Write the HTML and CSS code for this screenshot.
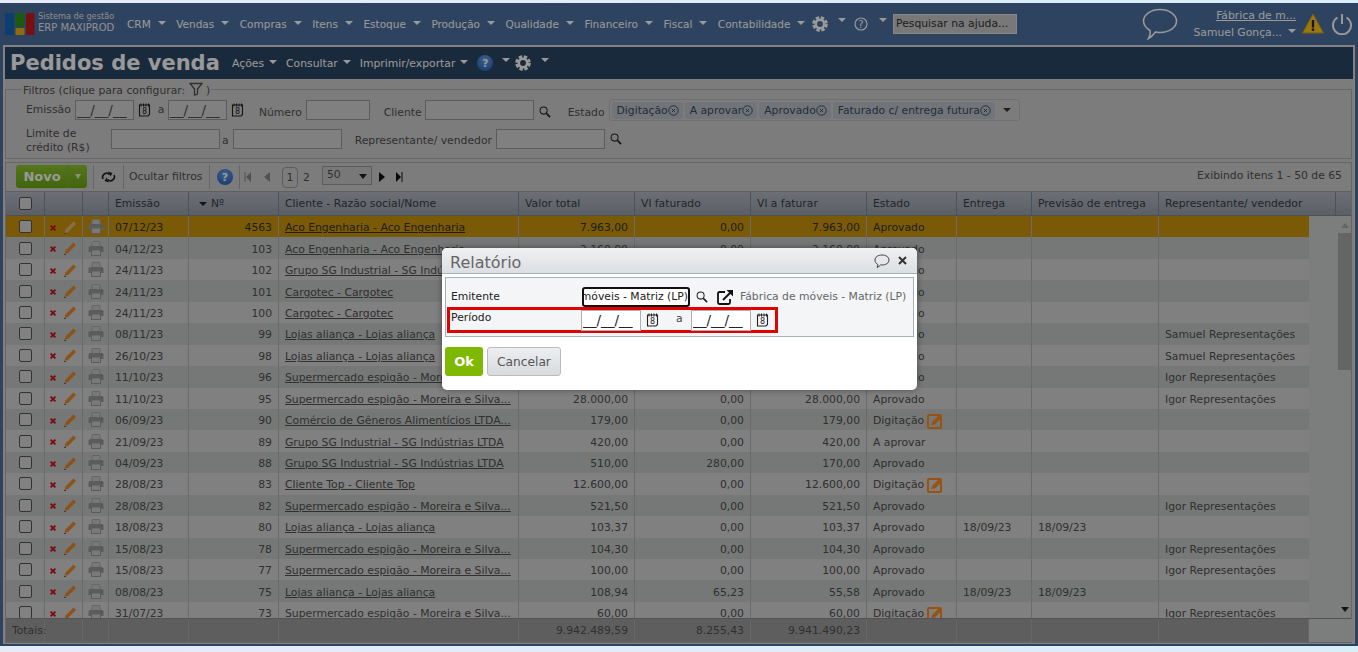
FILE: index.html
```html
<!DOCTYPE html>
<html lang="pt-BR">
<head>
<meta charset="utf-8">
<title>Pedidos de venda</title>
<link rel="stylesheet" href="styles.css">
</head>
<body>
<svg class="defs" width="0" height="0">
  <symbol id="cal" viewBox="0 0 13 14"><path d="M1.500 2h10v9.500L10 13H1.500V2z" fill="none" stroke="currentColor" stroke-width="1.100"/><path d="M3 .5v3M5.500.5v3M8 .5v3M10.500.5v3" stroke="currentColor"/><text x="6.500" y="11.200" font-size="8" text-anchor="middle" fill="currentColor" font-family="DejaVu Sans">8</text></symbol>
  <symbol id="search" viewBox="0 0 13 13"><circle cx="5" cy="5" r="3.800" fill="none" stroke="currentColor" stroke-width="1.100"/><path d="M8 8l4 4" stroke="currentColor" stroke-width="1.800"/></symbol>
  <symbol id="del" viewBox="0 0 10 10"><path d="M2 2l6 6M8 2l-6 6" stroke="#d0141c" stroke-width="2.400"/></symbol>
  <symbol id="pen" viewBox="0 0 14 14"><path d="M1.500 13l1-3.500L10.500 1.500 13 4 5 12z" fill="currentColor"/><path d="M1 13.500h2" stroke="#666"/></symbol>
  <symbol id="print" viewBox="0 0 16 15"><rect x="4" y=".5" width="8" height="5" rx="1" fill="#c8c8c8" stroke="#aaa"/><path d="M1.500 5h13l1 1.500V11H.5V6.500z" fill="#9a9a9a"/><rect x="3.500" y="9" width="9" height="5.500" fill="#ccc" stroke="#999"/><rect x="13" y="6" width="1.500" height="1.500" fill="#5a5"/></symbol>
  <symbol id="note" viewBox="0 0 16 16"><rect x="1" y="2" width="13" height="13" rx="1" fill="none" stroke="#ff8a1c" stroke-width="2"/><path d="M4 12l1-3 7-7 3 2.500-7 7z" fill="#ff8a1c"/></symbol>
  <symbol id="gear" viewBox="0 0 16 16"><circle cx="8" cy="8" r="4.200" fill="none" stroke="currentColor" stroke-width="2.600"/><circle cx="8" cy="8" r="6.300" fill="none" stroke="currentColor" stroke-width="3" stroke-dasharray="3.300 1.650"/></symbol>
  <symbol id="close" viewBox="0 0 10 10"><circle cx="5" cy="5" r="4.300" fill="none" stroke="currentColor" stroke-width=".9"/><path d="M3.500 3.500l3 3M6.500 3.500l-3 3" stroke="currentColor" stroke-width=".9"/></symbol>
</svg>

<div class="app">
  <header class="topbar">
    <svg class="logo" width="30" height="22" viewBox="0 0 30 22"><rect x="0" y="0" width="9" height="22" rx="1.500" fill="#1668bc"/><rect x="10.500" y="0" width="9" height="14" rx="1" fill="#2f961b"/><rect x="10.500" y="15" width="9" height="7" rx="1" fill="#f0b41a"/><rect x="21" y="0" width="8.500" height="22" rx="1.500" fill="#c81a22"/></svg>
    <div class="brand"><span class="brand-top">Sistema de gestão</span><span class="brand-name">ERP MAXIPROD</span></div>
    <nav class="menu">
      <span class="menu-item caret">CRM</span>
      <span class="menu-item caret">Vendas</span>
      <span class="menu-item caret">Compras</span>
      <span class="menu-item caret">Itens</span>
      <span class="menu-item caret">Estoque</span>
      <span class="menu-item caret">Produção</span>
      <span class="menu-item caret">Qualidade</span>
      <span class="menu-item caret">Financeiro</span>
      <span class="menu-item caret">Fiscal</span>
      <span class="menu-item caret">Contabilidade</span>
    </nav>
    <svg class="top-gear"><use href="#gear"/></svg>
    <span class="caret caret-solo"></span>
    <svg class="top-help" viewBox="0 0 14 14"><circle cx="7" cy="7" r="6" fill="none" stroke="currentColor" stroke-width="1.200"/><text x="7" y="10.500" font-size="10" text-anchor="middle" fill="currentColor" font-family="DejaVu Sans">?</text></svg>
    <span class="caret caret-solo second"></span>
    <input class="help-search" placeholder="Pesquisar na ajuda...">
    <svg class="chat" viewBox="0 0 36 32"><path d="M18 1.500c9 0 16.500 5 16.500 11.500S27 24.500 18 24.500c-1.500 0-3 0-4.500-.5-1.500 2-4 5-7 6.500 1.500-2.500 2-5 1.500-8C4 20 1.500 16.500 1.500 13 1.500 6.500 9 1.500 18 1.500z" fill="none" stroke="currentColor" stroke-width="1.500"/></svg>
    <div class="user">
      <a class="company">Fábrica de m...</a>
      <span class="username caret">Samuel Gonça...</span>
    </div>
    <svg class="warn" viewBox="0 0 22 21"><path d="M11 1l10.500 19H.5z" fill="#ffc81e" stroke="#c89a10"/><rect x="9.800" y="7" width="2.400" height="7.500" fill="#222"/><rect x="9.800" y="15.500" width="2.400" height="2.400" fill="#222"/></svg>
    <svg class="power" viewBox="0 0 22 22"><path d="M6.500 4.500a9 9 0 1 0 9 0" fill="none" stroke="currentColor" stroke-width="2"/><path d="M11 1v10" stroke="currentColor" stroke-width="2"/></svg>
  </header>

  <main class="panel">
    <div class="titlebar">
      <h1>Pedidos de venda</h1>
      <span class="title-menu caret">Ações</span>
      <span class="title-menu caret">Consultar</span>
      <span class="title-menu caret">Imprimir/exportar</span>
      <span class="round-help">?</span>
      <span class="caret caret-solo t1"></span>
      <svg class="title-gear"><use href="#gear"/></svg>
      <span class="caret caret-solo t2"></span>
    </div>

    <fieldset class="filters">
      <legend>Filtros (clique para configurar: <svg class="funnel" viewBox="0 0 14 14"><path d="M1 1.500h12L8.500 7v5l-3 1V7z" fill="none" stroke="currentColor" stroke-width="1.300"/></svg> )</legend>
      <div class="filter-row first">
        <label class="raised">Emissão</label>
        <input class="f-date m4" value="__/__/__">
        <svg class="i-cal m4"><use href="#cal"/></svg>
        <span class="raised sep8">a</span>
        <input class="f-date m4" value="__/__/__">
        <svg class="i-cal m4"><use href="#cal"/></svg>
        <label class="m17">Número</label>
        <input class="f-num m5">
        <label class="m14">Cliente</label>
        <input class="f-client m4">
        <svg class="i-search m5"><use href="#search"/></svg>
        <label class="m17">Estado</label>
        <div class="tags">
          <span class="tag">Digitação<svg class="x"><use href="#close"/></svg></span>
          <span class="tag">A aprovar<svg class="x"><use href="#close"/></svg></span>
          <span class="tag">Aprovado<svg class="x"><use href="#close"/></svg></span>
          <span class="tag">Faturado c/ entrega futura<svg class="x"><use href="#close"/></svg></span>
          <span class="tags-caret"></span>
        </div>
      </div>
      <div class="filter-row second">
        <label class="limit">Limite de<br>crédito (R$)</label>
        <input class="f-value">
        <span class="between">a</span>
        <input class="f-value">
        <label class="m13">Representante/ vendedor</label>
        <input class="f-value m5">
        <svg class="i-search m5"><use href="#search"/></svg>
      </div>
    </fieldset>

    <div class="toolbar">
      <div class="novo"><span class="novo-label">Novo</span><span class="novo-arrow"></span></div>
      <span class="tb-sep s1"></span>
      <svg class="refresh" viewBox="0 0 15 12"><path d="M2 8A4 4 0 0 1 8.500 3.500" fill="none" stroke="currentColor" stroke-width="1.700"/><path d="M13 4A4 4 0 0 1 6.500 8.500" fill="none" stroke="currentColor" stroke-width="1.700"/><path d="M7 .5l4.500 1.500-2 3.500zM8 11.500L3.500 10l2-3.500z" fill="currentColor"/></svg>
      <span class="tb-sep s2"></span>
      <span class="tb-text">Ocultar filtros</span>
      <span class="tb-sep s3"></span>
      <span class="round-help big">?</span>
      <span class="tb-sep s4"></span>
      <svg class="pg first-pg" viewBox="0 0 7 10"><path d="M1 0v10" stroke="currentColor"/><path d="M7 0v10L2 5z" fill="currentColor"/></svg>
      <svg class="pg prev-pg" viewBox="0 0 6 10"><path d="M6 0v10L0 5z" fill="currentColor"/></svg>
      <span class="pg-current">1</span>
      <span class="pg-num">2</span>
      <div class="pg-size">50<span class="pg-size-caret"></span></div>
      <svg class="pg next-pg" viewBox="0 0 6 10"><path d="M0 0v10l6-5z" fill="currentColor"/></svg>
      <svg class="pg last-pg" viewBox="0 0 7 10"><path d="M0 0v10l5-5z" fill="currentColor"/><path d="M6 0v10" stroke="currentColor"/></svg>
      <span class="tb-info">Exibindo itens 1 - 50 de 65</span>
    </div>

    <div class="grid">
      <div class="cols thead">
        <span class="center"><i class="chk"></i></span><span></span><span></span>
        <span>Emissão</span><span class="sorted">Nº</span><span>Cliente - Razão social/Nome</span>
        <span>Valor total</span><span>Vl faturado</span><span>Vl a faturar</span><span>Estado</span>
        <span>Entrega</span><span>Previsão de entrega</span><span>Representante/ vendedor</span><span></span>
      </div>
      <div class="tbody">
        <div class="rows">
          <div class="cols row selected"><span class="center"><i class="chk"></i></span><span class="acts"><svg class="i-del"><use href="#del"/></svg><svg class="i-pen"><use href="#pen"/></svg></span><span class="center"><svg class="i-print"><use href="#print"/></svg></span><span>07/12/23</span><span class="num">4563</span><span><a>Aco Engenharia - Aco Engenharia</a></span><span class="num">7.963,00</span><span class="num">0,00</span><span class="num">7.963,00</span><span>Aprovado</span><span></span><span></span><span></span></div>
          <div class="cols row"><span class="center"><i class="chk"></i></span><span class="acts"><svg class="i-del"><use href="#del"/></svg><svg class="i-pen"><use href="#pen"/></svg></span><span class="center"><svg class="i-print"><use href="#print"/></svg></span><span>04/12/23</span><span class="num">103</span><span><a>Aco Engenharia - Aco Engenharia</a></span><span class="num">2.160,00</span><span class="num">0,00</span><span class="num">2.160,00</span><span>Aprovado</span><span></span><span></span><span></span></div>
          <div class="cols row"><span class="center"><i class="chk"></i></span><span class="acts"><svg class="i-del"><use href="#del"/></svg><svg class="i-pen"><use href="#pen"/></svg></span><span class="center"><svg class="i-print"><use href="#print"/></svg></span><span>24/11/23</span><span class="num">102</span><span><a>Grupo SG Industrial - SG Indústrias LTDA</a></span><span class="num">840,00</span><span class="num">0,00</span><span class="num">840,00</span><span>Aprovado</span><span></span><span></span><span></span></div>
          <div class="cols row"><span class="center"><i class="chk"></i></span><span class="acts"><svg class="i-del"><use href="#del"/></svg><svg class="i-pen"><use href="#pen"/></svg></span><span class="center"><svg class="i-print"><use href="#print"/></svg></span><span>24/11/23</span><span class="num">101</span><span><a>Cargotec - Cargotec</a></span><span class="num">1.250,00</span><span class="num">0,00</span><span class="num">1.250,00</span><span>Aprovado</span><span></span><span></span><span></span></div>
          <div class="cols row"><span class="center"><i class="chk"></i></span><span class="acts"><svg class="i-del"><use href="#del"/></svg><svg class="i-pen"><use href="#pen"/></svg></span><span class="center"><svg class="i-print"><use href="#print"/></svg></span><span>24/11/23</span><span class="num">100</span><span><a>Cargotec - Cargotec</a></span><span class="num">1.250,00</span><span class="num">0,00</span><span class="num">1.250,00</span><span>Aprovado</span><span></span><span></span><span></span></div>
          <div class="cols row"><span class="center"><i class="chk"></i></span><span class="acts"><svg class="i-del"><use href="#del"/></svg><svg class="i-pen"><use href="#pen"/></svg></span><span class="center"><svg class="i-print"><use href="#print"/></svg></span><span>08/11/23</span><span class="num">99</span><span><a>Lojas aliança - Lojas aliança</a></span><span class="num">300,00</span><span class="num">0,00</span><span class="num">300,00</span><span>Aprovado</span><span></span><span></span><span>Samuel Representações</span></div>
          <div class="cols row"><span class="center"><i class="chk"></i></span><span class="acts"><svg class="i-del"><use href="#del"/></svg><svg class="i-pen"><use href="#pen"/></svg></span><span class="center"><svg class="i-print"><use href="#print"/></svg></span><span>26/10/23</span><span class="num">98</span><span><a>Lojas aliança - Lojas aliança</a></span><span class="num">300,00</span><span class="num">0,00</span><span class="num">300,00</span><span>Aprovado</span><span></span><span></span><span>Samuel Representações</span></div>
          <div class="cols row"><span class="center"><i class="chk"></i></span><span class="acts"><svg class="i-del"><use href="#del"/></svg><svg class="i-pen"><use href="#pen"/></svg></span><span class="center"><svg class="i-print"><use href="#print"/></svg></span><span>11/10/23</span><span class="num">96</span><span><a>Supermercado espigão - Moreira e Silva...</a></span><span class="num">500,00</span><span class="num">0,00</span><span class="num">500,00</span><span>Aprovado</span><span></span><span></span><span>Igor Representações</span></div>
          <div class="cols row"><span class="center"><i class="chk"></i></span><span class="acts"><svg class="i-del"><use href="#del"/></svg><svg class="i-pen"><use href="#pen"/></svg></span><span class="center"><svg class="i-print"><use href="#print"/></svg></span><span>11/10/23</span><span class="num">95</span><span><a>Supermercado espigão - Moreira e Silva...</a></span><span class="num">28.000,00</span><span class="num">0,00</span><span class="num">28.000,00</span><span>Aprovado</span><span></span><span></span><span>Igor Representações</span></div>
          <div class="cols row"><span class="center"><i class="chk"></i></span><span class="acts"><svg class="i-del"><use href="#del"/></svg><svg class="i-pen"><use href="#pen"/></svg></span><span class="center"><svg class="i-print"><use href="#print"/></svg></span><span>06/09/23</span><span class="num">90</span><span><a>Comércio de Gêneros Alimentícios LTDA...</a></span><span class="num">179,00</span><span class="num">0,00</span><span class="num">179,00</span><span class="state">Digitação<svg class="i-note"><use href="#note"/></svg></span><span></span><span></span><span></span></div>
          <div class="cols row"><span class="center"><i class="chk"></i></span><span class="acts"><svg class="i-del"><use href="#del"/></svg><svg class="i-pen"><use href="#pen"/></svg></span><span class="center"><svg class="i-print"><use href="#print"/></svg></span><span>21/09/23</span><span class="num">89</span><span><a>Grupo SG Industrial - SG Indústrias LTDA</a></span><span class="num">420,00</span><span class="num">0,00</span><span class="num">420,00</span><span>A aprovar</span><span></span><span></span><span></span></div>
          <div class="cols row"><span class="center"><i class="chk"></i></span><span class="acts"><svg class="i-del"><use href="#del"/></svg><svg class="i-pen"><use href="#pen"/></svg></span><span class="center"><svg class="i-print"><use href="#print"/></svg></span><span>04/09/23</span><span class="num">88</span><span><a>Grupo SG Industrial - SG Indústrias LTDA</a></span><span class="num">510,00</span><span class="num">280,00</span><span class="num">170,00</span><span>Aprovado</span><span></span><span></span><span></span></div>
          <div class="cols row"><span class="center"><i class="chk"></i></span><span class="acts"><svg class="i-del"><use href="#del"/></svg><svg class="i-pen"><use href="#pen"/></svg></span><span class="center"><svg class="i-print"><use href="#print"/></svg></span><span>28/08/23</span><span class="num">83</span><span><a>Cliente Top - Cliente Top</a></span><span class="num">12.600,00</span><span class="num">0,00</span><span class="num">12.600,00</span><span class="state">Digitação<svg class="i-note"><use href="#note"/></svg></span><span></span><span></span><span></span></div>
          <div class="cols row"><span class="center"><i class="chk"></i></span><span class="acts"><svg class="i-del"><use href="#del"/></svg><svg class="i-pen"><use href="#pen"/></svg></span><span class="center"><svg class="i-print"><use href="#print"/></svg></span><span>28/08/23</span><span class="num">82</span><span><a>Supermercado espigão - Moreira e Silva...</a></span><span class="num">521,50</span><span class="num">0,00</span><span class="num">521,50</span><span>Aprovado</span><span></span><span></span><span>Igor Representações</span></div>
          <div class="cols row"><span class="center"><i class="chk"></i></span><span class="acts"><svg class="i-del"><use href="#del"/></svg><svg class="i-pen"><use href="#pen"/></svg></span><span class="center"><svg class="i-print"><use href="#print"/></svg></span><span>18/08/23</span><span class="num">80</span><span><a>Lojas aliança - Lojas aliança</a></span><span class="num">103,37</span><span class="num">0,00</span><span class="num">103,37</span><span>Aprovado</span><span>18/09/23</span><span>18/09/23</span><span></span></div>
          <div class="cols row"><span class="center"><i class="chk"></i></span><span class="acts"><svg class="i-del"><use href="#del"/></svg><svg class="i-pen"><use href="#pen"/></svg></span><span class="center"><svg class="i-print"><use href="#print"/></svg></span><span>15/08/23</span><span class="num">78</span><span><a>Supermercado espigão - Moreira e Silva...</a></span><span class="num">104,30</span><span class="num">0,00</span><span class="num">104,30</span><span>Aprovado</span><span></span><span></span><span>Igor Representações</span></div>
          <div class="cols row"><span class="center"><i class="chk"></i></span><span class="acts"><svg class="i-del"><use href="#del"/></svg><svg class="i-pen"><use href="#pen"/></svg></span><span class="center"><svg class="i-print"><use href="#print"/></svg></span><span>15/08/23</span><span class="num">77</span><span><a>Supermercado espigão - Moreira e Silva...</a></span><span class="num">100,00</span><span class="num">0,00</span><span class="num">100,00</span><span>Aprovado</span><span></span><span></span><span>Igor Representações</span></div>
          <div class="cols row"><span class="center"><i class="chk"></i></span><span class="acts"><svg class="i-del"><use href="#del"/></svg><svg class="i-pen"><use href="#pen"/></svg></span><span class="center"><svg class="i-print"><use href="#print"/></svg></span><span>08/08/23</span><span class="num">75</span><span><a>Lojas aliança - Lojas aliança</a></span><span class="num">108,94</span><span class="num">65,23</span><span class="num">55,58</span><span>Aprovado</span><span>18/09/23</span><span>18/09/23</span><span></span></div>
          <div class="cols row"><span class="center"><i class="chk"></i></span><span class="acts"><svg class="i-del"><use href="#del"/></svg><svg class="i-pen"><use href="#pen"/></svg></span><span class="center"><svg class="i-print"><use href="#print"/></svg></span><span>31/07/23</span><span class="num">73</span><span><a>Supermercado espigão - Moreira e Silva...</a></span><span class="num">60,00</span><span class="num">0,00</span><span class="num">60,00</span><span class="state">Digitação<svg class="i-note"><use href="#note"/></svg></span><span></span><span></span><span>Igor Representações</span></div>
        </div>
        <div class="scrollbar">
          <span class="sb-up"></span>
          <div class="sb-track"><div class="sb-thumb"></div></div>
          <span class="sb-down"></span>
        </div>
      </div>
      <div class="cols tfoot">
        <span class="total-label">Totais:</span><span></span><span></span><span></span><span></span><span></span>
        <span class="num">9.942.489,59</span><span class="num">8.255,43</span><span class="num">9.941.490,23</span><span></span><span></span><span></span><span></span><span class="foot-gap"></span>
      </div>
    </div>
  </main>
</div>

<div class="overlay"></div>

<section class="modal">
  <div class="modal-head">
    <h2>Relatório</h2>
    <svg class="modal-chat" viewBox="0 0 16 14"><path d="M8 1c3.900 0 7 2 7 5s-3.100 5-7 5H6.500c-.8 1-2 2-3.500 2.500.7-1 1-2 .8-3C2 9.700 1 8 1 6c0-3 3.100-5 7-5z" fill="none" stroke="currentColor"/></svg>
    <svg class="modal-x" viewBox="0 0 9 9"><path d="M1 1l7 7M8 1L1 8" stroke="currentColor" stroke-width="2"/></svg>
  </div>
  <div class="modal-form">
    <div class="form-row emitente">
      <label>Emitente</label>
      <div class="focus-input"><span>móveis - Matriz (LP)</span></div>
      <svg class="i-search dark"><use href="#search"/></svg>
      <svg class="open" viewBox="0 0 17 16"><path d="M8 3H2.500A1.500 1.500 0 0 0 1 4.500v9A1.500 1.500 0 0 0 2.500 15h9a1.500 1.500 0 0 0 1.500-1.500V10" fill="none" stroke="#111" stroke-width="1.800"/><path d="M6 11L14 3" stroke="#111" stroke-width="2"/><path d="M9.500 1H16v6.500z" fill="#111"/></svg>
      <span class="emit-name">Fábrica de móveis - Matriz (LP)</span>
    </div>
    <div class="form-row periodo">
      <label>Período</label>
      <input class="d-date" value="__/__/__">
      <svg class="i-cal dark-cal"><use href="#cal"/></svg>
      <span class="d-a">a</span>
      <input class="d-date" value="__/__/__">
      <svg class="i-cal dark-cal"><use href="#cal"/></svg>
    </div>
  </div>
  <div class="modal-actions">
    <button class="ok">Ok</button>
    <button class="cancel">Cancelar</button>
  </div>
</section>
</body>
</html>
```

FILE: styles.css
```css
* { box-sizing: border-box; }
html, body { height: 100%; }
body {
  margin: 0;
  height: 652px;
  overflow: hidden;
  position: relative;
  background: linear-gradient(90deg, #e6ebf8, #d8eef8);
  font: 10.8px "DejaVu Sans", Verdana, sans-serif;
  color: #505050;
}
.defs { position: absolute; }
a { color: inherit; text-decoration: underline; }
input { font: inherit; color: #505050; margin: 0; border-radius: 0; }
h1, h2 { margin: 0; }

.app {
  margin-top: 3px;
  height: 643px;
  padding: 0 3px 2px;
  background: #4e71a0;
  border-top: 1px solid #4e71a0;
}

/* top bar */
.topbar { height: 41px; padding-bottom: 2px; display: flex; align-items: center; color: #fff; }
.logo { margin-left: 2px; flex: none; }
.brand { margin: -3px 0 0 3px; width: 87px; display: flex; flex-direction: column; line-height: 12px; flex: none; white-space: nowrap; }
.brand-top { font-size: 8.2px; color: #e6e6e6; }
.brand-name { font-size: 10px; color: #eee; }
.menu { display: flex; margin-left: 2px; width: 685px; flex: none; font-size: 10.5px; }
.menu-item { margin-right: 10.500px; white-space: nowrap; }
.caret::after {
  content: "";
  display: inline-block;
  margin-left: 7px;
  vertical-align: 3px;
  border: 4px solid transparent;
  border-bottom-width: 0;
  border-top: 4px solid #fff;
}
.caret-solo { width: 8px; height: 8px; display: flex; flex: none; }
.caret-solo::after { margin: 0; vertical-align: 0; }
.top-gear { width: 16px; height: 16px; flex: none; }
.topbar .caret-solo { margin-left: 10px; margin-top: -3px; }
.top-help { width: 14px; height: 14px; margin-left: 8px; flex: none; }
.topbar .caret-solo.second { margin-left: 11px; }
.help-search {
  width: 124px; height: 20px; margin: 0 0 0 6px; padding: 0 2px;
  background: #c9c9c9; border: 1px solid #e0e0e0; flex: none;
}
.help-search::placeholder { color: #333; opacity: 1; }
.chat { width: 36px; height: 32px; margin-left: 125px; flex: none; }
.user { width: 118px; display: flex; flex-direction: column; align-items: flex-end; line-height: 17px; flex: none; white-space: nowrap; }
.username::after { margin-left: 6px; }
.warn { width: 22px; height: 21px; margin-left: 6px; flex: none; }
.power { width: 22px; height: 22px; margin-left: 7px; flex: none; }

/* panel */
.panel { height: 599px; border: 2px solid #d8d8d8; background: #cfcfcf; }
.titlebar { height: 32px; background: #2b4664; display: flex; align-items: center; color: #fff; }
.titlebar h1 { font-size: 21px; font-weight: bold; margin-left: 5px; width: 222px; flex: none; white-space: nowrap; }
.title-menu { margin-right: 9px; white-space: nowrap; }
.title-menu::after { margin-left: 5px; }
.round-help {
  width: 16px; height: 16px; border-radius: 50%;
  background: radial-gradient(circle at 50% 30%, #6aa0e8, #1d5cb4);
  color: #fff; font-weight: bold; display: flex; align-items: center; justify-content: center; flex: none;
}
.t1 { margin-left: 9px; margin-top: -3px; }
.title-gear { width: 16px; height: 16px; margin-left: 5px; flex: none; }
.t2 { margin-left: 10px; margin-top: -3px; }

/* filters */
.filters {
  margin: 2px 0 0; padding: 0 0 0 20px; height: 78px; width: 1347px;
  border: 1px solid #aaa; min-width: 0;
}
.filters legend { padding: 0 1px; margin-left: -4px; line-height: 20px; height: 16px; white-space: nowrap; }
.funnel { width: 14px; height: 14px; vertical-align: -2px; }
.filter-row { display: flex; align-items: center; }
.filter-row.first { height: 24px; margin-top: 3px; }
.filter-row.second { height: 30px; margin-top: 1px; }
.filters input { height: 20px; background: #d5d5d5; border: 1px solid #999; padding: 0 2px; }
.raised { margin-top: -5px; }
.m4 { margin-left: 4px; } .m5 { margin-left: 5px; }
.m13 { margin-left: 13px; } .m14 { margin-left: 14px; } .m17 { margin-left: 17px; }
.sep8 { margin-left: 7px; }
.filters .f-date { width: 59px; margin-top: -5px; font-size: 13.5px; padding: 0 1px; }
.filters .sep8 + .f-date { margin-left: 3.500px; }
.i-cal + .m17 { margin-left: 15px; }
.f-num { width: 64px; margin-top: -4px; } .f-client { width: 109px; margin-top: -4px; } .f-value { width: 109px; }
.f-num.m5 { margin-left: 4px; }
.f-client.m4 { margin-left: 3px; }
.second .f-value.m5 { margin-left: 4px; }
.i-cal { width: 13px; height: 14px; flex: none; color: #222; margin-top: -5px; }
.i-search { width: 12px; height: 12px; flex: none; color: #222; }
.second .i-search { margin-top: -2px; }
.tags {
  display: flex; align-items: center; gap: 2px; height: 22px; width: 411px; margin: -4px 0 0 4px; padding-left: 2px;
  border: 1px solid #bbb; border-radius: 3px;
}
.tag { height: 17px; padding: 0 4px 0 5px; background: #bcc4cc; border-radius: 3px; display: flex; align-items: center; white-space: nowrap; color: #3c4a58; }
.x { width: 11px; height: 11px; color: #3c4a58; }
.tags-caret { margin-left: 6px; border: 4px solid transparent; border-bottom-width: 0; border-top-color: #333; }
.limit { width: 85px; line-height: 14px; margin-top: 2px; }
.between { margin: 0 4px 0 2px; }
.second input { margin-top: -2px; }

/* toolbar */
.toolbar {
  margin-top: 3px; height: 29px; width: 1347px; padding-left: 10px;
  display: flex; align-items: center; border: 1px solid #aaa; border-bottom: 0;
}
.novo { width: 71px; height: 23px; margin-top: -2px; display: flex; border-radius: 3px; background: linear-gradient(#8fc52e, #6ca716); flex: none; }
.novo-label { width: 52px; text-align: center; line-height: 23px; font-size: 13px; font-weight: bold; color: #fff; }
.novo-arrow { flex: 1; border-left: 1px solid #88b040; position: relative; }
.novo-arrow::after {
  content: ""; position: absolute; left: 6px; top: 9px;
  border: 3.500px solid transparent; border-bottom-width: 0; border-top: 5px solid #e8f0d0;
}
.tb-sep { width: 1px; height: 24px; background: #aaa; flex: none; }
.s1 { margin-left: 6px; }
.refresh { width: 15px; height: 12px; margin-left: 7px; color: #222; flex: none; }
.s2 { margin-left: 7px; }
.tb-text { margin: -2px 0 0 5px; white-space: nowrap; width: 80px; }
.round-help.big { width: 16px; height: 16px; margin-left: 7px; }
.s4 { margin-left: 6px; }
.pg { height: 10px; color: #555; flex: none; }
.first-pg { width: 7px; margin-left: 4px; color: #888; }
.prev-pg { width: 6px; margin-left: 13px; color: #888; }
.pg-current { margin-left: 12px; width: 16px; height: 21px; border: 1px solid #999; border-radius: 4px; text-align: center; line-height: 19px; flex: none; }
.pg-num { margin-left: 5px; width: 7px; }
.pg-size { margin-left: 12px; width: 50px; height: 19px; border: 1px solid #999; background: #c8c8c8; padding-left: 4px; line-height: 16px; position: relative; flex: none; margin-top: -4px; }
.pg-size-caret { position: absolute; right: 4px; top: 7px; border: 4px solid transparent; border-bottom-width: 0; border-top: 5px solid #222; }
.next-pg { width: 6px; margin-left: 7px; color: #111; }
.last-pg { width: 7px; margin-left: 11px; color: #111; }
.tb-info { margin-left: auto; margin-right: 9px; white-space: nowrap; margin-top: -3px; }

/* table */
.grid { width: 1347px; border: 1px solid #aaa; border-top: 0; }
.cols {
  display: grid;
  grid-template-columns: 39px 38px 26px 80px 90px 240px 116px 116px 116px 90px 75px 127px 150px 0;
}
.cols > span { padding: 0 6px; white-space: nowrap; overflow: hidden; display: flex; align-items: center; }
.thead { height: 25px; background: linear-gradient(#b4bac4, #98a0aa); grid-template-columns: 39px 38px 26px 80px 90px 240px 116px 116px 116px 90px 75px 127px 177px 17px; border-top: 1px solid #a0a0a0; border-bottom: 1px solid #888; }
.thead > span { border-right: 1px solid #808894; color: #3a3e44; }
.thead > span:last-child { border-right: 0; }
.sorted::before { content: ""; margin: 0 4px 0 4px; border: 4px solid transparent; border-bottom-width: 0; border-top: 4px solid #222; }
.cols > .center { justify-content: center; padding: 0; }
.chk { width: 13px; height: 13px; border: 1px solid #555; border-radius: 2px; background: #d8d8d8; display: block; }
.tbody { height: 402px; display: flex; overflow: hidden; background: #cfd2d0; }
.rows { width: 1303px; flex: none; }
.row { height: 21.45px; background: #d5d5d5; }
.row:nth-child(even) { background: #c3c9c5; }
.row.selected { background: #cd960d; color: #333; }
.row > span { border-right: 1px solid #b2b2b2; padding-top: 2px; }
.row > .center, .row > .acts { padding-top: 0; }
.row > span:last-child { border-right: 0; }
.row > .num, .tfoot > .num { justify-content: flex-end; }
.acts { gap: 6px; padding: 0 0 0 4px !important; }
.i-del { width: 8px; height: 8px; margin-top: 2px; flex: none; }
.i-pen { width: 14px; height: 14px; color: #e88a2c; flex: none; }
.selected .i-pen { color: #e8b878; }
.i-print { width: 16px; height: 15px; }
.state { gap: 3px; }
.i-note { width: 16px; height: 16px; flex: none; }
.scrollbar { width: 44px; flex: none; padding-left: 27px; display: flex; flex-direction: column; align-items: center; }
.sb-up { margin-top: 7px; border: 4px solid transparent; border-top-width: 0; border-bottom: 5px solid #a8a8a8; flex: none; }
.sb-track { flex: 1; width: 13px; margin-top: 5px; }
.sb-thumb { height: 137px; background: #a8a8a8; }
.sb-down { margin-bottom: 6px; border: 4px solid transparent; border-bottom-width: 0; border-top: 5px solid #222; flex: none; }
.tfoot { height: 24px; background: #9d9d9d; grid-template-columns: 39px 38px 26px 80px 90px 240px 116px 116px 116px 90px 75px 127px 150px 44px; border-top: 1px solid #8a8a8a; }
.tfoot > span { border-right: 1px solid #aaa; overflow: visible; }
.tfoot > span:last-child { background: #cfd2d0; border-right: 0; }

/* overlay + modal */
.overlay { position: absolute; left: 0; right: 0; top: 3px; height: 643px; background: rgba(0, 0, 0, .4); }
.modal {
  position: absolute; left: 442px; top: 248px; width: 475px; height: 142px;
  background: #fff; border-radius: 5px; box-shadow: 0 0 6px rgba(0, 0, 0, .4);
  padding: 0 3px;
}
.modal-head {
  margin: 0 -3px; height: 26px; padding: 3px 10px 0 8px; display: flex; align-items: center;
  background: linear-gradient(#eff0f2, #dcdfe3); border-bottom: 1px solid #a8b0b8; border-radius: 5px 5px 0 0;
  color: #555;
}
.modal-head h2 { font-size: 16px; font-weight: normal; flex: 1; color: #666; }
.modal-chat { width: 16px; height: 14px; color: #444; margin-top: -3px; }
.modal-x { width: 9px; height: 9px; margin: -3px 0 0 8px; color: #333; }
.modal-form { margin-top: 3px; height: 60px; background: #f3f5f7; border: 1px solid #a8b0b8; padding: 0 1px; }
.form-row { display: flex; align-items: center; }
.emitente { height: 29px; padding: 8px 0 0 4px; color: #222; }
.emitente label { width: 131px; flex: none; color: #222; }
.focus-input { width: 108px; height: 20px; border: 2px solid #111; border-radius: 3px; background: #fff; overflow: hidden; white-space: nowrap; line-height: 15px; flex: none; color: #222; display: flex; justify-content: flex-end; }
.i-search.dark { margin-left: 6px; }
.open { width: 17px; height: 16px; margin-left: 9px; flex: none; }
.emit-name { margin-left: 6px; color: #666; white-space: nowrap; }
.periodo { height: 26px; width: 331px; border: 3px solid #e00000; padding-left: 1px; color: #444; }
.periodo label { margin-top: -5px; width: 130px; flex: none; color: #222; }
.d-date { width: 60px; height: 21px; border: 1px solid #b0b0b0; background: #fff; padding: 0 1px; flex: none; font-size: 13.5px; color: #222; }
.dark-cal { margin: 0 0 0 5px; }
.d-a { margin: -3px 9px 0 17px; width: 6px; color: #444; }
.modal-actions { display: flex; gap: 4px; margin-top: 10px; }
.ok { width: 38px; height: 29px; border: 0; border-radius: 3px; background: #7fb800; color: #fff; font: bold 13px "DejaVu Sans", sans-serif; padding: 0; }
.cancel { width: 74px; height: 29px; border: 1px solid #b8bcc0; border-radius: 3px; background: linear-gradient(#eceef0, #d8dbde); color: #555; font: 12.200px "DejaVu Sans", sans-serif; padding: 0; }
```
